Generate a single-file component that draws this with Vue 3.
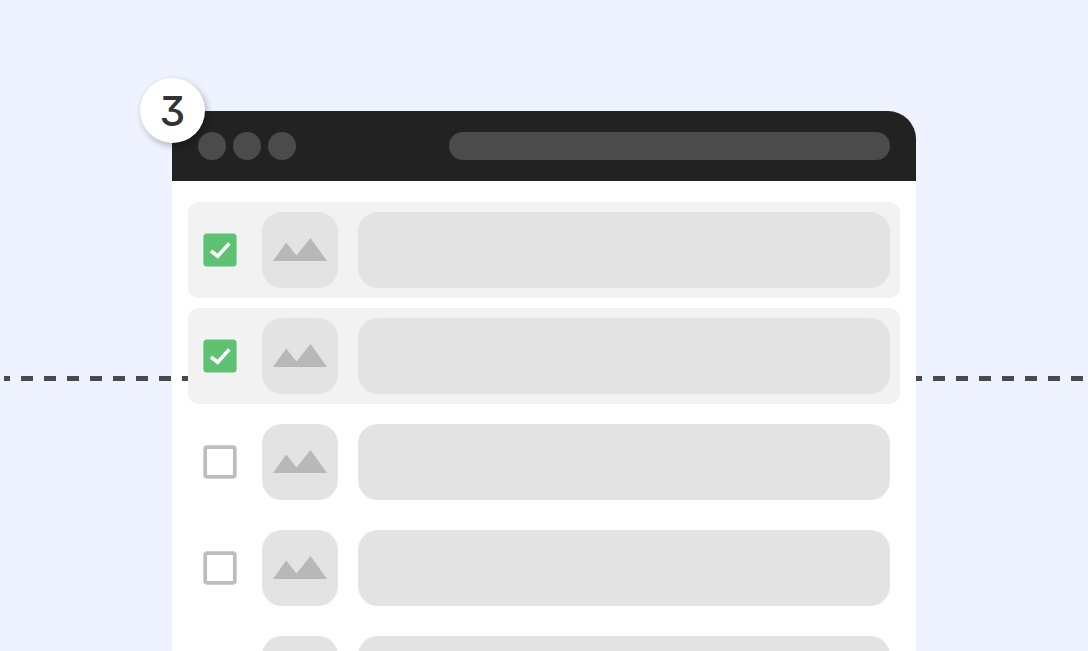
<script setup>
const rows = [
  { id: 1, done: true },
  { id: 2, done: true },
  { id: 3, done: false },
  { id: 4, done: false },
  { id: 5, done: false },
]
</script>

<template>
  <div class="stage">
    <div class="cut cut-left"></div>
    <div class="cut cut-right"></div>
    <div class="badge">3</div>
    <div class="window">
      <div class="head">
        <div class="dots">
          <span class="dot"></span>
          <span class="dot"></span>
          <span class="dot"></span>
        </div>
        <div class="address"></div>
      </div>
      <div class="list">
        <div v-for="row in rows" :key="row.id" class="row" :class="{ selected: row.done }">
          <svg class="check" width="34" height="34" viewBox="0 0 34 34">
            <template v-if="row.done">
              <rect x="0.4" y="0.4" width="33.2" height="33.2" rx="3.5" fill="#5dc272" />
              <path d="M8 18 14.7 23.2 26.3 10.4" fill="none" stroke="#fff" stroke-width="3.6" />
            </template>
            <rect v-else x="2.2" y="2.2" width="29.6" height="29.6" rx="2" fill="#fff" stroke="#bdbdbd" stroke-width="3.7" />
          </svg>
          <div class="thumb">
            <svg width="54" height="23" viewBox="0 0 54 23">
              <path d="M0 23 13.2 4.4 23.5 17.4 37.5 0 54 23Z" fill="#b8b8b8" />
            </svg>
          </div>
          <div class="text"></div>
        </div>
      </div>
    </div>
  </div>
</template>

<style>
body {
  margin: 0;
  background: #eff3ff;
}
</style>

<style scoped>
.stage {
  position: relative;
  height: 651px;
  overflow: hidden;
  background: #eff3ff;
  padding: 111px 0 0 172px;
  box-sizing: border-box;
}
/* dashes run over the window's white margin on the left, not on the right */
.cut {
  position: absolute;
  top: 376px;
  height: 5px;
  background: linear-gradient(90deg, #4a4a4a 12px, transparent 12px) -6px 0 / 23px 100% repeat-x;
  z-index: 1;
}
.cut-left {
  left: 4px;
  width: 184px;
}
.cut-right {
  left: 916px;
  width: 167px;
}
.badge {
  position: absolute;
  left: 140px;
  top: 78px;
  width: 65px;
  height: 65px;
  border-radius: 50%;
  background: #fff;
  box-shadow: 2px 3px 7px rgba(0, 0, 0, 0.28);
  display: flex;
  align-items: center;
  justify-content: center;
  font-family: "Inter", sans-serif;
  font-feature-settings: "cv09";
  font-size: 41px;
  font-weight: 500;
  color: #333;
  z-index: 2;
}
.window {
  width: 744px;
  background: #fff;
  border-radius: 28px 28px 0 0;
  overflow: hidden;
}
.head {
  height: 70px;
  background: #222;
  display: flex;
  align-items: center;
  padding: 0 26px;
}
.dots {
  display: flex;
  gap: 7px;
  margin-right: 153px;
}
.dot {
  width: 28px;
  height: 28px;
  border-radius: 50%;
  background: #4b4b4b;
}
.address {
  flex: 1;
  height: 28px;
  border-radius: 14px;
  background: #4b4b4b;
}
.list {
  display: flex;
  flex-direction: column;
  gap: 10px;
  padding: 21px 16px 0;
}
.row {
  display: flex;
  align-items: center;
  padding: 10px 10px 10px 15px;
  border-radius: 10px;
}
.selected {
  background: #f2f2f2;
}
.check {
  display: block;
  flex-shrink: 0;
}
.thumb {
  width: 76px;
  height: 76px;
  margin-left: 25px;
  border-radius: 20px;
  background: #e3e3e3;
  display: flex;
  align-items: center;
  justify-content: center;
  flex-shrink: 0;
}
.thumb svg {
  display: block;
  margin-bottom: 2px;
}
.text {
  flex: 1;
  height: 76px;
  margin-left: 20px;
  border-radius: 20px;
  background: #e3e3e3;
}
</style>
